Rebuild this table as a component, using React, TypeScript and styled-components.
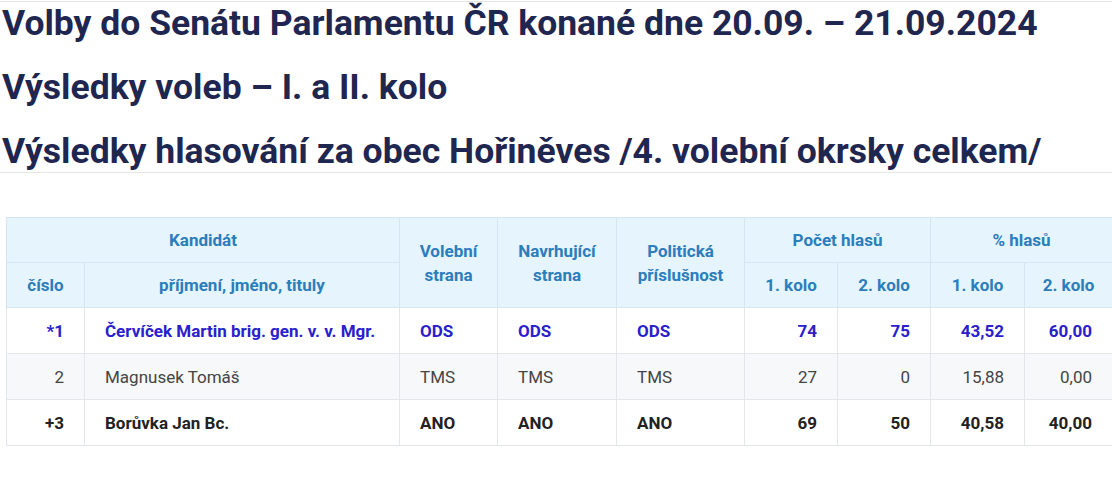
import React from 'react';
import styled, { createGlobalStyle } from 'styled-components';

const GlobalStyle = createGlobalStyle`
  body {
    margin: 0;
    background: #fff;
    font-family: Roboto, "Liberation Sans", sans-serif;
  }
`;

const Page = styled.div`
  display: flex;
  flex-direction: column;
  width: 1112px;
`;

const TitleBlock = styled.div`
  display: flex;
  flex-direction: column;
  gap: 24px;
  margin-top: 1px;
  border-top: 1px solid #e6e6e6;
  border-bottom: 1px solid #e6e6e6;
  padding: 1px 0 1px 2px;
`;

const Title = styled.h2`
  margin: 0;
  font-size: 35.5px;
  line-height: 40px;
  font-weight: 700;
  color: #1f2650;
  white-space: nowrap;
`;

const TableWrap = styled.div`
  padding: 44px 0 0 6px;
`;

const Table = styled.table`
  border-collapse: collapse;
  table-layout: fixed;
  width: 1106px;
  font-size: 17px;
  border: 1px solid #dfe4e8;
`;

const Th = styled.th`
  background: #e5f4fd;
  color: #2c7dbb;
  font-weight: 700;
  font-size: 17px;
  line-height: 24px;
  height: 44px;
  padding: 0 4px;
  text-align: center;
  vertical-align: middle;
  border: 1px solid #d6e6f0;
`;

type Tone = 'elected' | 'plain' | 'second';

const Tr = styled.tr<{ $tone: Tone }>`
  height: 46px;
  background: ${(p) => (p.$tone === 'plain' ? '#f7f8fa' : '#fff')};
  color: ${(p) =>
    p.$tone === 'elected' ? '#2a20cc' : p.$tone === 'plain' ? '#444' : '#222'};
  font-weight: ${(p) => (p.$tone === 'plain' ? 400 : 700)};
`;

const Td = styled.td<{ $align?: 'left' | 'right' }>`
  border: 1px solid #e3e6ea;
  padding: 0 20px;
  white-space: nowrap;
  text-align: ${(p) => p.$align || 'left'};
  vertical-align: middle;
`;

const colWidths = [78, 315, 98, 119, 128, 93, 93, 94, 88];

const rows: {
  tone: Tone;
  no: string;
  name: string;
  party: string;
  votes: [string, string];
  pct: [string, string];
}[] = [
  {
    tone: 'elected',
    no: '*1',
    name: 'Červíček Martin brig. gen. v. v. Mgr.',
    party: 'ODS',
    votes: ['74', '75'],
    pct: ['43,52', '60,00'],
  },
  {
    tone: 'plain',
    no: '2',
    name: 'Magnusek Tomáš',
    party: 'TMS',
    votes: ['27', '0'],
    pct: ['15,88', '0,00'],
  },
  {
    tone: 'second',
    no: '+3',
    name: 'Borůvka Jan Bc.',
    party: 'ANO',
    votes: ['69', '50'],
    pct: ['40,58', '40,00'],
  },
];

const App: React.FC = () => {
  return (
    <Page>
      <GlobalStyle />
      <TitleBlock>
        <Title>Volby do Senátu Parlamentu ČR konané dne 20.09. – 21.09.2024</Title>
        <Title>Výsledky voleb – I. a II. kolo</Title>
        <Title>Výsledky hlasování za obec Hořiněves /4. volební okrsky celkem/</Title>
      </TitleBlock>
      <TableWrap>
        <Table>
          <colgroup>
            {colWidths.map((w, i) => (
              <col key={i} style={{ width: w }} />
            ))}
          </colgroup>
          <thead>
            <tr>
              <Th colSpan={2}>Kandidát</Th>
              <Th rowSpan={2}>
                Volební
                <br />
                strana
              </Th>
              <Th rowSpan={2}>
                Navrhující
                <br />
                strana
              </Th>
              <Th rowSpan={2}>
                Politická
                <br />
                příslušnost
              </Th>
              <Th colSpan={2}>Počet hlasů</Th>
              <Th colSpan={2}>% hlasů</Th>
            </tr>
            <tr>
              <Th>číslo</Th>
              <Th>příjmení, jméno, tituly</Th>
              <Th>1. kolo</Th>
              <Th>2. kolo</Th>
              <Th>1. kolo</Th>
              <Th>2. kolo</Th>
            </tr>
          </thead>
          <tbody>
            {rows.map((r) => (
              <Tr key={r.no} $tone={r.tone}>
                <Td $align="right">{r.no}</Td>
                <Td>{r.name}</Td>
                <Td>{r.party}</Td>
                <Td>{r.party}</Td>
                <Td>{r.party}</Td>
                <Td $align="right">{r.votes[0]}</Td>
                <Td $align="right">{r.votes[1]}</Td>
                <Td $align="right">{r.pct[0]}</Td>
                <Td $align="right">{r.pct[1]}</Td>
              </Tr>
            ))}
          </tbody>
        </Table>
      </TableWrap>
    </Page>
  );
};

export default App;
